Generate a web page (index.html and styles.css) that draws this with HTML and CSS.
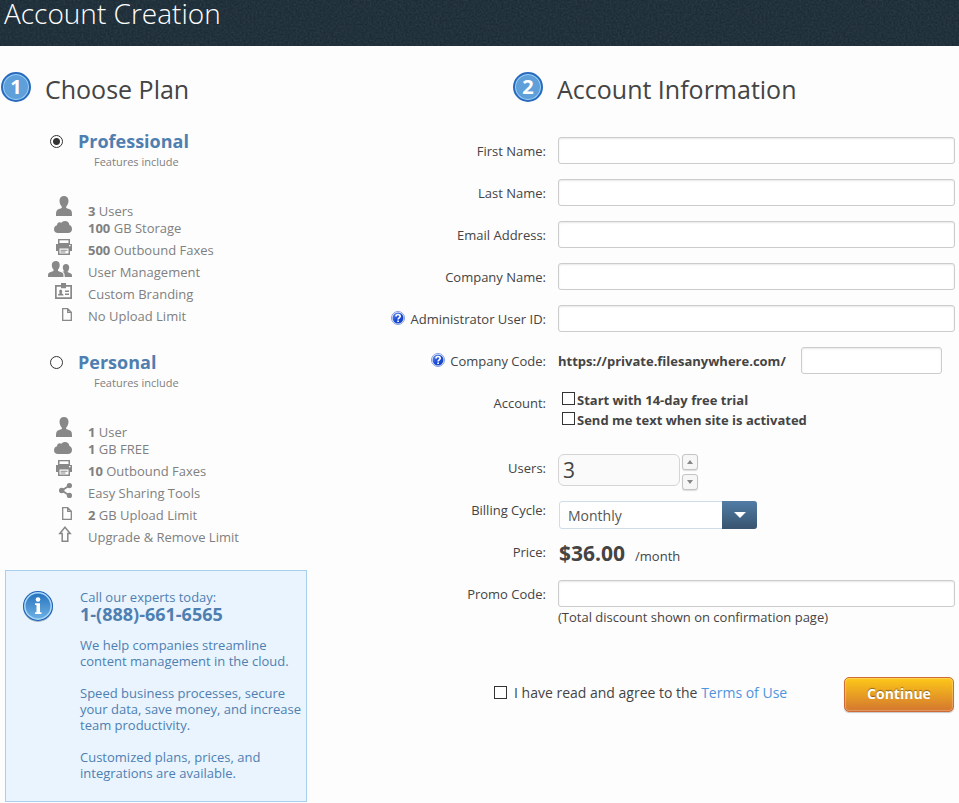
FILE: index.html
```html
<!DOCTYPE html>
<html lang="en">
<head>
<meta charset="utf-8">
<title>Account Creation</title>
<link rel="stylesheet" href="styles.css">
</head>
<body>
<svg class="defs" aria-hidden="true">
  <symbol id="i-user" viewBox="0 0 16 20"><path d="M8 0c2.700 0 4.500 1.900 4.500 4.500 0 2.700-1 4.900-2.300 6v1.600c1.500.6 4 1.100 5 2.400.8 1 .8 3 .8 5.500H0c0-2.500 0-4.500.8-5.500 1-1.300 3.500-1.800 5-2.400v-1.600c-1.300-1.100-2.300-3.300-2.300-6C3.500 1.900 5.300 0 8 0z"/></symbol>
  <symbol id="i-cloud" viewBox="0 0 18 12"><path d="M4 12a4 4 0 0 1-4-3.800C0 6 1.300 4.600 3 4.200 3.100 2.400 4.200 1.200 5.700 1.200c.7 0 1.200.2 1.700.6C8.200.7 9.300 0 10.900 0c2.500 0 4.300 1.600 4.500 4C17 4.600 18 6 18 7.900c0 2.400-1.600 4.100-4 4.100z"/></symbol>
  <symbol id="i-print" viewBox="0 0 16 16"><path d="M2 0h12v4H2z"/><path d="M3.500 1.300h9V4h-9z" fill="#fdfdfd"/><path d="M0 5h2V4h12v1h2v7h-2v4H2v-4H0z"/><path d="M3.500 9.500h9v5h-9zM13 6h1.500v1.200H13z" fill="#fdfdfd"/><path d="M4.500 10.700h7v1h-7zM4.500 12.600h5v1h-5z"/></symbol>
  <symbol id="i-users" viewBox="0 0 24 16"><path d="M8 0c2.300 0 3.700 1.500 3.700 3.700S10.900 7.800 10 8.600v1.300c1.600.7 4 1.100 4.800 2.200.7.900.7 2.100.7 3.900H0c0-1.800 0-3 .7-3.900.8-1.100 3.200-1.500 4.800-2.200V8.600c-.9-.8-1.700-2.700-1.700-4.900S5.700 0 8 0z"/><path d="M18 3c2 0 3.200 1.400 3.200 3.200S20.500 9.600 19.700 10.300v1c1.300.5 3.200.8 3.800 1.700.5.700.5 1.600.5 3h-7.300c0-2.800-.3-4.400-2.200-5.200l1.800-.6c-.8-.8-1.500-2.200-1.500-4C14.800 4.400 16 3 18 3z"/></symbol>
  <symbol id="i-card" viewBox="0 0 17 16"><path d="M0 2h6V0h5v2h6v14H0zm1.700 1.800v10.400h13.600V3.800H11v1.400H6V3.800z" fill-rule="evenodd"/><path d="M3 12.500c0-1.300.6-1.700 1.600-2V9.800C3.900 9 4 6.500 5.700 6.500S7.500 9 6.800 9.800v.7c1 .3 1.700.7 1.700 2zM10 7.500h4V9h-4zM10 10.500h4V12h-4z"/></symbol>
  <symbol id="i-file" viewBox="0 0 10 13"><path d="M.7.700h5l3.600 3.600v8H.7zM5.700.7v3.600h3.600" fill="none" stroke="currentColor" stroke-width="1.300"/></symbol>
  <symbol id="i-share" viewBox="0 0 13 15"><path d="M10.500 2.600L2.800 7.500l7.700 4.900" fill="none" stroke="currentColor" stroke-width="1.800"/><circle cx="10.400" cy="2.600" r="2.600"/><circle cx="2.700" cy="7.500" r="2.700"/><circle cx="10.400" cy="12.400" r="2.600"/></symbol>
  <symbol id="i-up" viewBox="0 0 14 16"><path d="M7 1.200l5.200 6.300H9.800v7.800H4.200V7.500H1.800z" fill="none" stroke="currentColor" stroke-width="1.500"/></symbol>
  <linearGradient id="g-info" x1="0" y1="0" x2="0" y2="1"><stop offset="0" stop-color="#2573bd"/><stop offset="1" stop-color="#6fb1e5"/></linearGradient>
  <linearGradient id="g-help" x1="0" y1="0" x2="1" y2="1"><stop offset="0" stop-color="#6c97ee"/><stop offset=".5" stop-color="#1c4bd8"/><stop offset="1" stop-color="#1243c4"/></linearGradient>
  <symbol id="i-help" viewBox="0 0 14 14"><circle cx="7" cy="7" r="6.500" fill="#fff" stroke="#7f9be0"/><circle cx="7" cy="7" r="5.500" fill="url(#g-help)"/><path d="M5 5.500C5 2.900 9.200 2.900 9.200 5.300 9.200 6.800 7.200 6.800 7.100 8.500M7.100 9.500v1.600" fill="none" stroke="#fff" stroke-width="1.700"/></symbol>
</svg>

<header class="banner">
  <svg class="grain" aria-hidden="true"><filter id="grain" x="0" y="0" width="100%" height="100%"><feTurbulence type="fractalNoise" baseFrequency=".5" numOctaves="2" seed="4"/><feColorMatrix values="0 0 0 0 .2  0 0 0 0 .32  0 0 0 0 .38  1 0 0 0 -.25"/></filter><rect width="100%" height="100%" filter="url(#grain)"/></svg>
  <h1>Account Creation</h1>
</header>

<main class="page">
  <section class="plans">
    <div class="step"><span class="badge">1</span><h2>Choose Plan</h2></div>

    <div class="plan">
      <div class="plan-head"><input type="radio" name="plan" id="pro" checked><label for="pro">Professional</label></div>
      <p class="sub">Features include</p>
      <ul class="features">
        <li><span class="icon"><svg width="16" height="20"><use href="#i-user"/></svg></span><span><b>3</b> Users</span></li>
        <li class="tight"><span class="icon"><svg width="18" height="12"><use href="#i-cloud"/></svg></span><span><b>100</b> GB Storage</span></li>
        <li><span class="icon"><svg width="16" height="16"><use href="#i-print"/></svg></span><span><b>500</b> Outbound Faxes</span></li>
        <li><span class="icon"><svg width="24" height="16"><use href="#i-users"/></svg></span><span>User Management</span></li>
        <li><span class="icon"><svg width="17" height="16"><use href="#i-card"/></svg></span><span>Custom Branding</span></li>
        <li><span class="icon"><svg width="10" height="13"><use href="#i-file"/></svg></span><span>No Upload Limit</span></li>
      </ul>
    </div>

    <div class="plan">
      <div class="plan-head"><input type="radio" name="plan" id="personal"><label for="personal">Personal</label></div>
      <p class="sub">Features include</p>
      <ul class="features">
        <li><span class="icon"><svg width="16" height="20"><use href="#i-user"/></svg></span><span><b>1</b> User</span></li>
        <li class="tight"><span class="icon"><svg width="18" height="12"><use href="#i-cloud"/></svg></span><span><b>1</b> GB FREE</span></li>
        <li><span class="icon"><svg width="16" height="16"><use href="#i-print"/></svg></span><span><b>10</b> Outbound Faxes</span></li>
        <li><span class="icon"><svg width="13" height="15"><use href="#i-share"/></svg></span><span>Easy Sharing Tools</span></li>
        <li><span class="icon"><svg width="10" height="13"><use href="#i-file"/></svg></span><span><b>2</b> GB Upload Limit</span></li>
        <li><span class="icon"><svg width="14" height="16"><use href="#i-up"/></svg></span><span>Upgrade &amp; Remove Limit</span></li>
      </ul>
    </div>

    <aside class="info">
      <svg class="info-icon" width="32" height="32" viewBox="0 0 32 32" aria-hidden="true"><circle cx="16" cy="17" r="15" fill="#9fb4c8"/><circle cx="16" cy="16" r="15" fill="#1c5fb5"/><circle cx="16" cy="16" r="13.200" fill="url(#g-info)" stroke="#a9d8f8" stroke-width="1.500"/><circle cx="16" cy="9.500" r="2.300" fill="#fff"/><path d="M13 13.300h5v8.900h1.500V24H13v-1.800h1.500v-7.100H13z" fill="#fff"/></svg>
      <div class="info-text">
        <div class="call">Call our experts today:<strong>1-(888)-661-6565</strong></div>
        <p>We help companies streamline content management in the cloud.</p>
        <p>Speed business processes, secure your data, save money, and increase team productivity.</p>
        <p>Customized plans, prices, and integrations are available.</p>
      </div>
    </aside>
  </section>

  <form class="account">
    <div class="step step-2"><span class="badge">2</span><h2>Account Information</h2></div>

    <div class="row"><label for="first">First Name:</label><input class="text" id="first" type="text"></div>
    <div class="row"><label for="last">Last Name:</label><input class="text" id="last" type="text"></div>
    <div class="row"><label for="email">Email Address:</label><input class="text" id="email" type="text"></div>
    <div class="row"><label for="company">Company Name:</label><input class="text" id="company" type="text"></div>
    <div class="row"><label for="admin"><svg class="help" width="14" height="14"><use href="#i-help"/></svg> Administrator User ID:</label><input class="text" id="admin" type="text"></div>
    <div class="row"><label for="code"><svg class="help" width="14" height="14"><use href="#i-help"/></svg> Company Code:</label>
      <div class="url"><b>https://private.filesanywhere.com/</b><input class="text" id="code" type="text"></div></div>
    <div class="row tall"><span class="label">Account:</span>
      <div class="checks">
        <label><input type="checkbox">Start with 14-day free trial</label>
        <label><input type="checkbox">Send me text when site is activated</label>
      </div></div>
    <div class="row"><label for="users">Users:</label>
      <div class="stepper"><input id="users" type="text" value="3">
        <div class="arrows"><button type="button" class="up" aria-label="Increase"></button><button type="button" class="down" aria-label="Decrease"></button></div></div></div>
    <div class="row"><label for="cycle">Billing Cycle:</label>
      <div class="select"><select id="cycle"><option>Monthly</option></select></div></div>
    <div class="row"><span class="label">Price:</span>
      <div class="price"><strong>$36.00</strong><span>/month</span></div></div>
    <div class="row"><label for="promo">Promo Code:</label>
      <div><input class="text" id="promo" type="text"><p class="note">(Total discount shown on confirmation page)</p></div></div>

    <div class="submit">
      <input type="checkbox" id="agree"><label for="agree">I have read and agree to the <a href="#">Terms of Use</a></label>
      <button class="continue" type="submit">Continue</button>
    </div>
  </form>
</main>
</body>
</html>
```
FILE: styles.css
```css
* { box-sizing: border-box; }

body {
  margin: 0;
  background: #fdfdfd;
  color: #444;
  font: 13px/16px "Open Sans", sans-serif;
}

h1, h2, p, ul { margin: 0; padding: 0; font-weight: 400; }

.defs { position: absolute; width: 0; height: 0; }

.banner {
  position: relative;
  height: 46px;
  padding-left: 4px;
  background: #1c2b35;
}
.banner h1 {
  position: relative;
  color: #fff;
  font-size: 28px;
  font-weight: 300;
  line-height: 27px;
}
.grain { position: absolute; inset: 0; width: 100%; height: 100%; opacity: .25; }

.page { display: flex; padding-right: 4px; }
.plans { flex: 0 0 385px; }
.account { flex: 1; min-width: 0; }

.step { display: flex; gap: 14px; padding: 26px 0 0 1px; height: 86px; }
.step-2 { padding-left: 128px; height: 91px; }
.step h2 { font-size: 25px; line-height: 34px; }
.badge {
  width: 30px;
  height: 30px;
  border: 2px solid #2a6bbd;
  border-radius: 50%;
  background: #5fa0da;
  box-shadow: inset 0 0 0 1px #a0d4f8;
  color: #fff;
  font-size: 20px;
  font-weight: 700;
  line-height: 26px;
  text-align: center;
}

.plan { height: 221px; padding-left: 48px; }
.plan-head { display: flex; gap: 14px; }
.plan-head label { color: #4f7fb0; font-size: 18px; font-weight: 700; line-height: 18px; }
.sub { margin-left: 46px; color: #808080; font-size: 11px; line-height: 23px; }

input[type="radio"], input[type="checkbox"] {
  appearance: none;
  flex: none;
  width: 13px;
  height: 13px;
  margin: 0;
  border: 1px solid #333;
  background: #fff;
}
input[type="radio"] { margin: 3px 1px 0 2px; border-radius: 50%; }
input[type="radio"]:checked { background: radial-gradient(circle, #333 3px, #fff 4px); }

.features { list-style: none; padding-top: 24px; color: #808080; }
.features li { display: flex; gap: 16px; align-items: flex-end; height: 22px; line-height: 16px; }
.features .tight { height: 17px; }
.features .icon { display: flex; justify-content: flex-end; width: 24px; padding-bottom: 3px; }
.features svg { display: block; color: #888; fill: currentColor; }

.info {
  display: flex;
  gap: 26px;
  width: 302px;
  margin: -4px 0 0 5px;
  padding: 18px 4px 20px 16px;
  border: 1px solid #a8cfee;
  background: #e9f4ff;
  color: #4f7fb0;
}
.info-icon { flex: none; margin-top: 1px; }
.info-text p + p { margin-top: 16px; }
.call { margin-bottom: 14px; }
.call strong { display: block; font-size: 18px; line-height: 18px; }

.row { display: grid; grid-template-columns: 161px 1fr; column-gap: 12px; height: 42px; }
.row.tall { height: 65px; }
.row > label, .row > .label { line-height: 28px; text-align: right; white-space: nowrap; }
.help { margin-right: 2px; vertical-align: -1px; }

.text {
  display: block;
  width: 100%;
  height: 27px;
  padding: 0 6px;
  border: 1px solid #ccc;
  border-radius: 3px;
  background: #fff;
  box-shadow: inset 0 1px 2px #e8e8e8;
  font: inherit;
}
.url { display: flex; justify-content: space-between; padding-right: 13px; line-height: 28px; }
.url .text { width: 141px; }

.checks { padding: 1px 0 0 4px; }
.checks label { display: flex; gap: 2px; font-weight: 700; line-height: 20px; }
.checks label input { margin-top: 2px; }

.stepper { display: flex; gap: 2px; }
.stepper input {
  width: 122px;
  height: 32px;
  padding: 0 4px;
  border: 1px solid #d5d5d5;
  border-radius: 6px;
  background: #fafafa;
  color: #444;
  font: 21px "Open Sans", sans-serif;
}
.arrows { display: flex; flex-direction: column; gap: 4px; }
.arrows button {
  display: grid;
  place-items: center;
  width: 16px;
  height: 16px;
  padding: 0;
  border: 1px solid #c4c4c4;
  border-radius: 3px;
  background: #f6f6f6;
  box-shadow: 0 1px 1px #ddd;
}
.arrows button::after { content: ""; border: 0 solid transparent; border-width: 0 3px; }
.arrows .up::after { border-bottom: 4px solid #888; }
.arrows .down::after { border-top: 4px solid #888; }

.select { position: relative; width: 199px; padding: 5px 0 0 1px; }
.select select {
  appearance: none;
  width: 100%;
  height: 28px;
  padding: 0 8px;
  border: 1px solid #cfdde8;
  border-radius: 3px;
  background: #fff;
  color: #555;
  font: 14px "Open Sans", sans-serif;
}
.select::before {
  content: "";
  position: absolute;
  right: 0;
  top: 5px;
  width: 35px;
  height: 28px;
  border-radius: 0 3px 3px 0;
  background: linear-gradient(#527da6, #38546f);
  pointer-events: none;
}
.select::after {
  content: "";
  position: absolute;
  right: 11px;
  top: 16px;
  border: 6px solid transparent;
  border-top-color: #fff;
  border-bottom: 0;
  pointer-events: none;
}

.price { display: flex; gap: 10px; align-items: baseline; padding-left: 1px; line-height: 30px; }
.price strong { font-size: 21px; }
.note { padding-top: 2px; }

.submit { display: flex; align-items: flex-start; margin-top: 55px; padding: 0 1px 0 109px; font-size: 14px; }
.submit > input { margin-top: 9px; }
.submit label { margin: 0 auto 0 7px; line-height: 32px; }
.submit label a { color: #4f94dd; text-decoration: none; }
.continue {
  width: 110px;
  height: 35px;
  padding: 0 0 2px;
  border: 1px solid #cf6a35;
  border-radius: 5px;
  background: linear-gradient(#fdc818, #d4762f);
  box-shadow: 0 1px 1px #c8c8c8, inset 0 0 1px 1px #ffffff44;
  color: #fff;
  font: 700 14px/20px "Open Sans", sans-serif;
  text-shadow: 0 -1px 1px #00000066;
}
```
